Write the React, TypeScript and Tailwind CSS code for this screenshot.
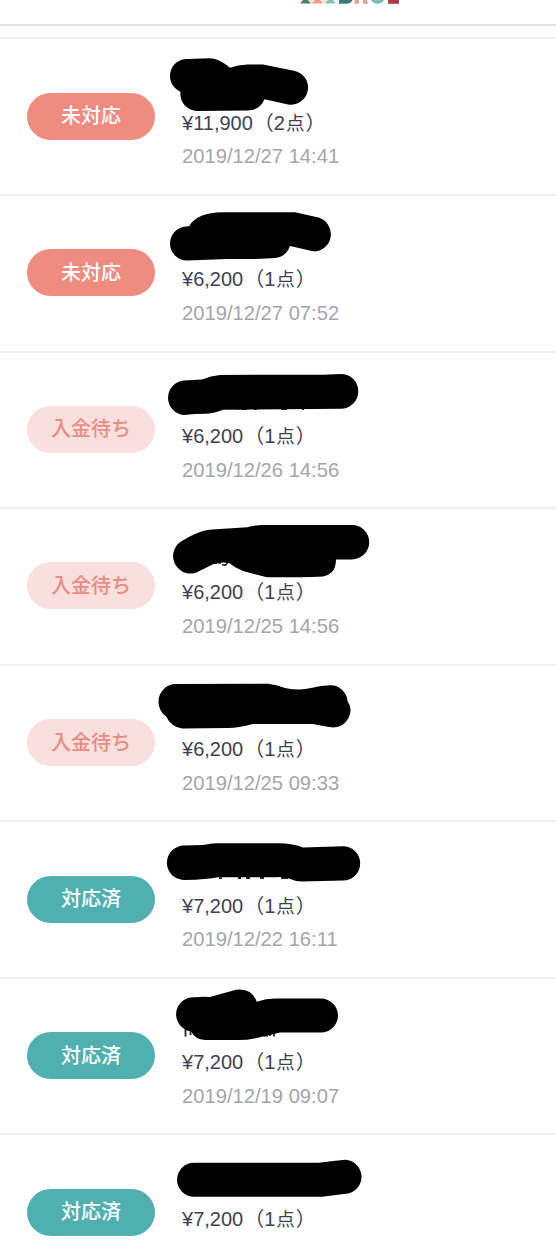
import type { ReactNode } from "react"
import clsx from "clsx"

type Status = "new" | "waiting" | "done"

type Order = {
  id: number
  status: Status
  price: string
  count: number
  date?: string
  mask: string
  marks?: string
}

const statusLabel: Record<Status, string> = {
  new: "未対応",
  waiting: "入金待ち",
  done: "対応済",
}

const statusClassName: Record<Status, string> = {
  new: "bg-[#ef8b7f] text-white",
  waiting: "bg-[#f9dfdd] text-[#e78d83]",
  done: "bg-[#50b0b0] text-white",
}

// mask: marker stroke over the customer name, marks: bits of the name left below it
const orders: Order[] = [
  {
    id: 1,
    status: "new",
    price: "11,900",
    count: 2,
    date: "2019/12/27 14:41",
    mask: "M188 21L209 20.3Q218 20 230 29.7Q238 26.5 247 26.4L263 26.4L294 32.8A17 17 0 0 1 288 66.4L264.5 61.3Q260 72 248 72.4L197 73A17 17 0 0 1 180.5 53.7A17 17 0 0 1 188 21Z",
  },
  {
    id: 2,
    status: "new",
    price: "6,200",
    count: 1,
    date: "2019/12/27 07:52",
    mask: "M187 31.5L189.3 31Q197 17.5 223 17.3L295 17.3L318.5 22.6A17.2 17.2 0 0 1 313 56.3L290 51Q286 62 275 63Q263 64.3 227 64L187 65.5A17 17 0 0 1 187 31.5Z",
  },
  {
    id: 3,
    status: "waiting",
    price: "6,200",
    count: 1,
    date: "2019/12/26 14:56",
    mask: "M184 28.5L202 27.4Q211 23.5 220 22.9L323 22.7L341 22A17.3 17.3 0 0 1 341 56.7L223 57.7Q213 61.5 205 61.8Q195 61.8 184 63A17.3 17.3 0 0 1 184 28.5Z",
    marks: "M237 57.2h2M241 57.2h6M254 57.2h3M281 57.2h6M302 57.2h2",
  },
  {
    id: 4,
    status: "waiting",
    price: "6,200",
    count: 1,
    date: "2019/12/25 14:56",
    mask: "M181 33.5Q188 29 195 26Q204 21.8 212 21.4L247 19.2Q256 17 263 17L352 17A17.2 17.2 0 0 1 352 51.4L336 51.4Q336 68 319 68.8Q300 69.5 267 69.3L243 63Q234 59 230 55.5Q222 53 213 56.3L200 62.7A17 17 0 0 1 181 33.5Z",
    marks: "M214 55.2h3M218.5 55.2h2M222 56.5Q227 58.5 227 54",
  },
  {
    id: 5,
    status: "waiting",
    price: "6,200",
    count: 1,
    date: "2019/12/25 09:33",
    mask: "M176 19L268 18.7Q276 19.5 285 22.9Q300 26 311 23Q321 20.5 330 20.3A17 17 0 0 1 347.5 36A17 17 0 0 1 333 62.4Q324 61.6 313 59L253 59Q238 63 228 63L182 63.4Q171 62 166.2 51.5Q158.5 46 158.5 36.5A17.5 17.5 0 0 1 176 19Z",
  },
  {
    id: 6,
    status: "done",
    price: "7,200",
    count: 1,
    date: "2019/12/22 16:11",
    mask: "M184 24.6L203 24Q210 22.2 217 22.2L278 22.2Q294 22.4 303 26.6L343 25.2A17.2 17.2 0 0 1 343 59.6L302 60.4Q295 60.4 288 57.2Q282 55.5 276 56.2L218 56.2Q208 58.6 184 58.9A17.1 17.1 0 0 1 184 24.6Z",
    marks: "M219 57.2h3M238 57h3M246 57h4M260 57h4M281 57h7",
  },
  {
    id: 7,
    status: "done",
    price: "7,200",
    count: 1,
    date: "2019/12/19 09:07",
    mask: "M195.5 19.3Q202 18.5 210 19L236 11.8Q252 10 256.7 23.7Q266 20.6 275 20.6L321 20.6A17 17 0 0 1 321 54.6L280 54.6L260 59.3Q248 62 239 62L205 62Q195 61.5 191 53.3A17.1 17.1 0 0 1 195.5 19.3Z",
    marks: "M185.5 51v7.5M190.5 52v5M264 57.6h4M270 54v4M274 54v4.5",
  },
  {
    id: 8,
    status: "done",
    price: "7,200",
    count: 1,
    mask: "M194 28.7L319 28.7Q331 27 343 25.9A17 17 0 0 1 346 59.8L322 62.7L194 62.7A17 17 0 0 1 194 28.7Z",
  },
]

function Logo() {
  return (
    <svg className="h-[5px] w-[100px]" viewBox="300 0 100 5">
      <path d="M309 0h6l-1 3h-4zM321 0h7l-1 3h-5z" fill="#f5e6cb" />
      <path d="M303 0h5l3 3.4h-11z" fill="#4a8068" />
      <path d="M315 0h5l3 3.4h-11z" fill="#ea9c94" />
      <path d="M328 0h5l3 3.4h-11z" fill="#8fc0b0" />
      <path d="M339 0h13.5Q351 3.8 346 3.8h-7z" fill="#3c7b77" />
      <path d="M355 0h4v3.8h-5zM363 0h4l1 3.8h-5z" fill="#e59da0" />
      <path d="M371 0h13q-2 3.8-6.5 3.8t-6.5-3.8z" fill="#7bbcb4" />
      <path d="M388 0h11v3.8h-11z" fill="#a83a46" />
    </svg>
  )
}

function Badge({ status, children }: { status: Status; children: ReactNode }) {
  return (
    <span
      className={clsx(
        "mt-[53.4px] flex h-[47px] w-32 shrink-0 items-center justify-center rounded-full text-[20px] font-medium",
        statusClassName[status]
      )}
    >
      {children}
    </span>
  )
}

function OrderRow({ order }: { order: Order }) {
  return (
    <li className="relative flex h-[156.57px] gap-[27px] border-t-2 border-[#f0f0f1] pl-[27px]">
      <Badge status={order.status}>{statusLabel[order.status]}</Badge>
      <div className="pt-[66.4px] text-[20px] leading-[34px] whitespace-nowrap">
        <p className="h-[33.7px] text-[#3c4254]">
          ¥{order.price}
          <span className="ml-px">（{order.count}</span>
          <span className="mx-px text-[18.5px]">点</span>）
        </p>
        {order.date ? (
          <p className="text-[20.2px] text-[#a3a5ad]">{order.date}</p>
        ) : null}
      </div>
      <svg
        className="absolute -top-px left-[150px] h-20 w-[230px]"
        viewBox="150 0 230 80"
      >
        {order.marks ? (
          <path d={order.marks} fill="none" stroke="#222530" strokeWidth="1.8" />
        ) : null}
        <path d={order.mask} />
      </svg>
    </li>
  )
}

export default function App() {
  return (
    <main className="h-[1240px] w-[556px] overflow-hidden bg-white font-['Liberation_Sans','Noto_Sans_CJK_JP',sans-serif]">
      <header className="flex h-[25.5px] border-b-2 border-[#e1e1e2] pl-[300px]">
        <Logo />
      </header>
      <ul className="pt-[11.9px]">
        {orders.map((order) => (
          <OrderRow key={order.id} order={order} />
        ))}
      </ul>
    </main>
  )
}
